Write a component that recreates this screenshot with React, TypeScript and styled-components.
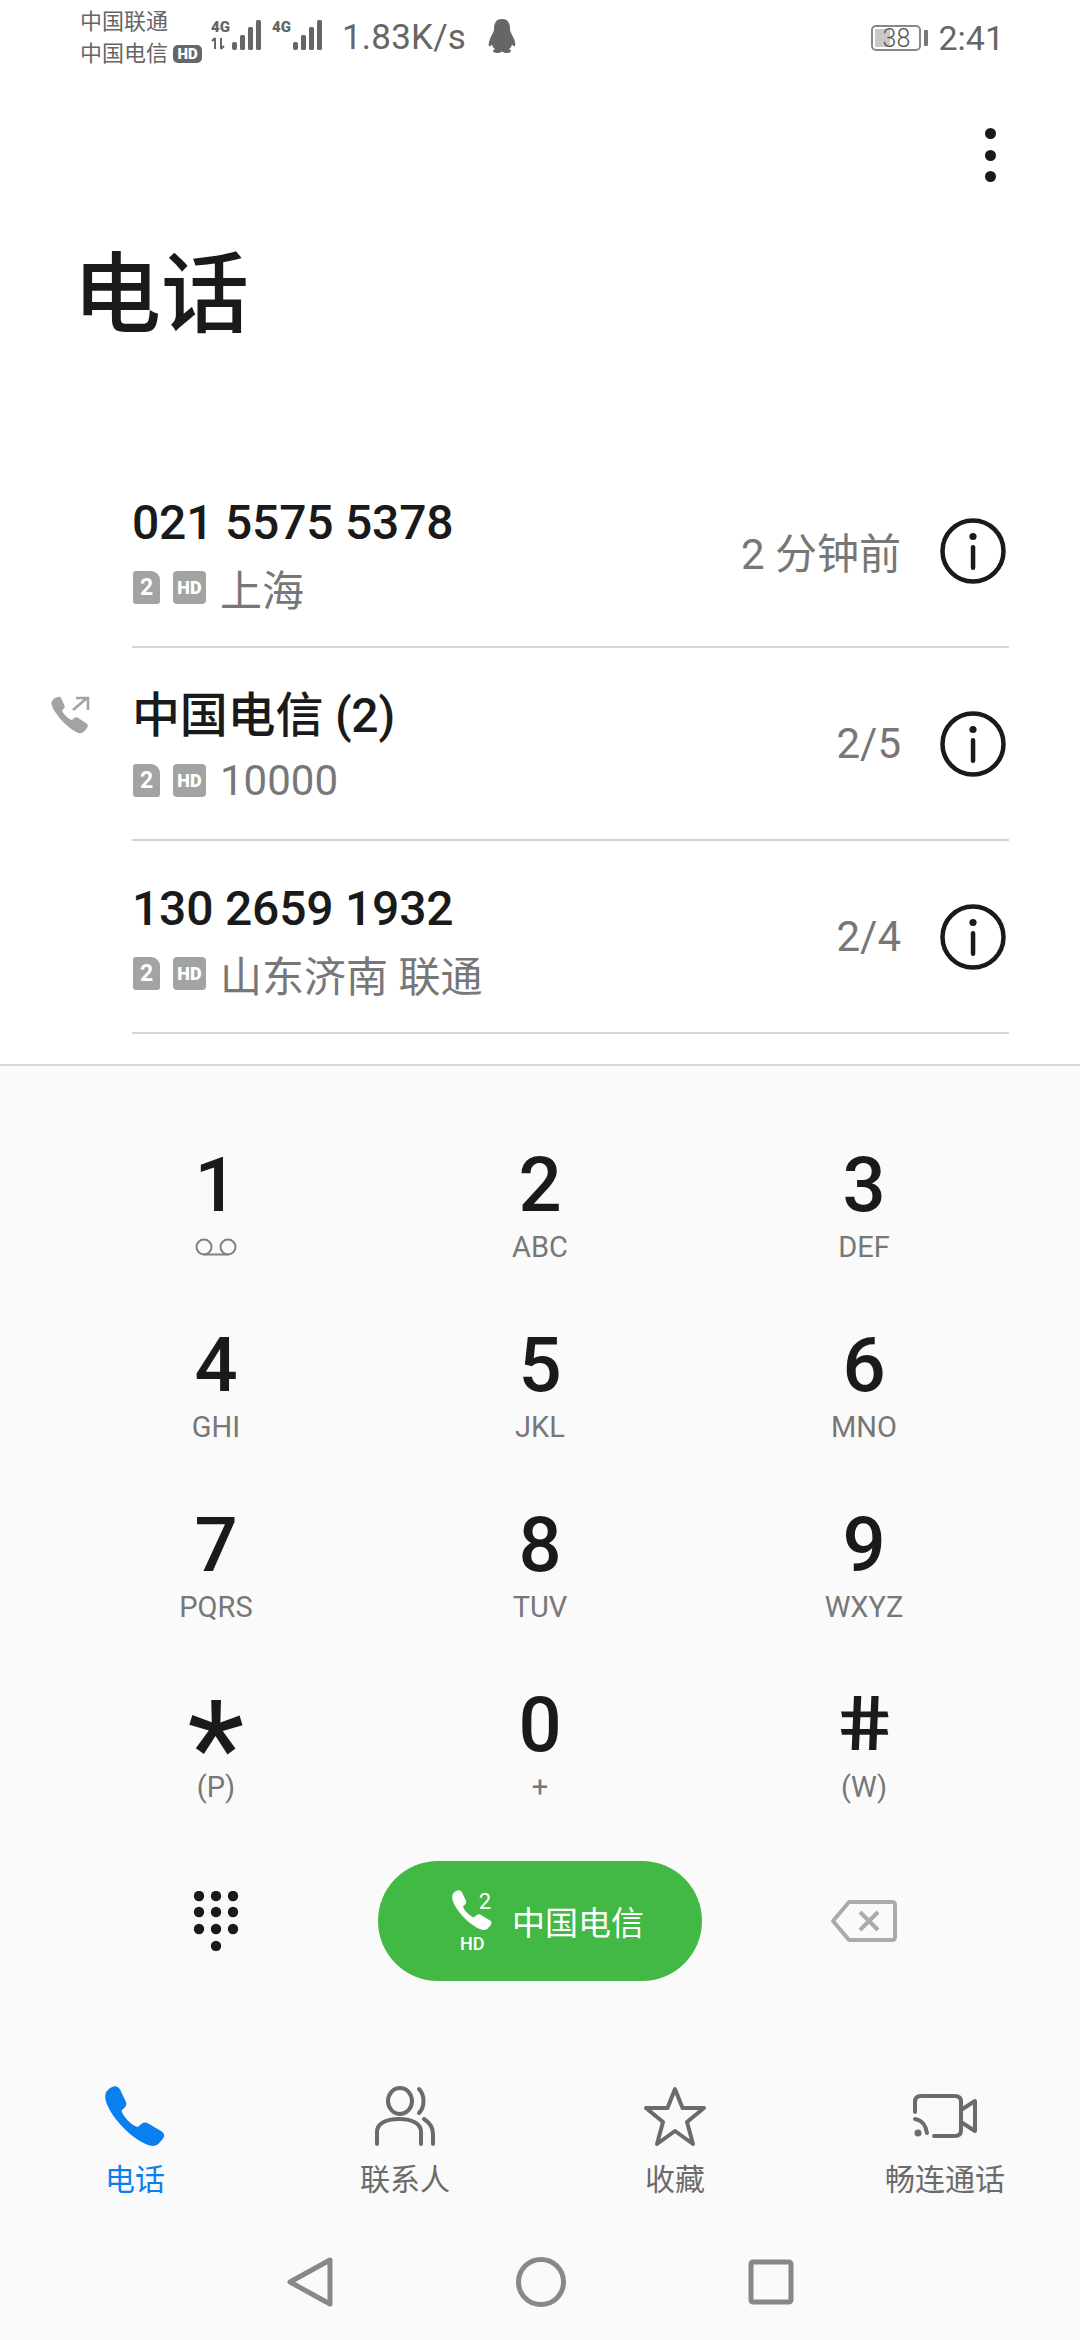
import React from "react";
import styled, { createGlobalStyle } from "styled-components";

const GlobalStyle = createGlobalStyle`
  html, body { margin: 0; padding: 0; background: #fff; }
  body { font-family: Roboto, "Noto Sans CJK SC", sans-serif; }
  * { box-sizing: border-box; }
`;

const Page = styled.div`
  width: 1080px;
  height: 2340px;
  overflow: hidden;
  display: flex;
  flex-direction: column;
  background: #fff;
  font-family: Roboto, "Noto Sans CJK SC", sans-serif;
`;

/* status bar */
const StatusBar = styled.div`
  height: 72px;
  padding: 4px 76px 0 80px;
  display: flex;
  align-items: center;
  color: #666;
`;
const Carriers = styled.div`
  width: 131px;
  flex: none;
  display: flex;
  flex-direction: column;
  font-size: 22px;
  line-height: 32px;
  white-space: nowrap;
`;
const CarrierLine = styled.div`
  display: flex;
  align-items: center;
  gap: 5px;
`;
const HdTiny = styled.span`
  flex: none;
  font-size: 15px;
  font-weight: 900;
  line-height: 18px;
  height: 18px;
  width: 29px;
  border-radius: 5px;
  background: #666;
  color: #fff;
  text-align: center;
`;
const Signals = styled.div`
  display: flex;
  gap: 11px;
  margin-top: -4px;
`;
const Signal = styled.svg`
  display: block;
  flex: none;
`;
const Speed = styled.span`
  font-size: 35px;
  line-height: 40px;
  margin-left: 20px;
  letter-spacing: 0.2px;
  white-space: nowrap;
`;
const Penguin = styled.svg`
  margin-left: 21px;
  margin-top: -4px;
  flex: none;
`;
const Spacer = styled.div`
  flex: 1;
`;
const Battery = styled.div`
  width: 50px;
  height: 26px;
  border: 2px solid #888;
  border-radius: 5px;
  display: flex;
  align-items: center;
  justify-content: center;
  font-size: 25px;
  font-weight: 300;
  color: #555;
  background: linear-gradient(90deg, #c8c8c8 0 38%, transparent 38%);
  background-clip: content-box;
  padding: 2px;
`;
const BatteryNub = styled.div`
  width: 4px;
  height: 16px;
  background: #777;
  border-radius: 1px;
  margin-left: 3px;
`;
const Time = styled.span`
  font-size: 34px;
  line-height: 40px;
  margin-left: 10px;
`;

/* header */
const MenuBar = styled.div`
  height: 171px;
  padding: 56px 84px 0 0;
  display: flex;
  flex-direction: column;
  align-items: flex-end;
  gap: 10.5px;
`;
const Dot = styled.span`
  width: 11px;
  height: 11px;
  border-radius: 50%;
  background: #1a1a1a;
`;
const Title = styled.h1`
  margin: 2px 0 110px 73px;
  font-size: 88px;
  line-height: 100px;
  height: 100px;
  font-weight: 500;
  color: #1a1a1a;
`;

/* call log */
const List = styled.div`
  display: flex;
  flex-direction: column;
`;
const Row = styled.div`
  height: 193px;
  margin: 0 71px 0 132px;
  border-bottom: 2px solid #d4d4d4;
  display: flex;
  align-items: center;
  position: relative;
`;
const RowMain = styled.div`
  flex: 1;
  display: flex;
  flex-direction: column;
  gap: 11px;
  padding-top: 5px;
`;
const RowTitle = styled.div`
  font-size: 48px;
  line-height: 58px;
  font-weight: 500;
  letter-spacing: -0.2px;
  color: #1a1a1a;
  white-space: nowrap;
`;
const RowSub = styled.div`
  display: flex;
  align-items: center;
  height: 50px;
  font-size: 42px;
  color: #777;
  white-space: nowrap;
`;
const SimBadge = styled.span`
  width: 27px;
  height: 33px;
  background: #a3a3a3;
  border-radius: 3px 9px 3px 3px;
  color: #fff;
  font-size: 23px;
  font-weight: 700;
  line-height: 33px;
  text-align: center;
  margin-left: 1px;
`;
const HdBadge = styled.span`
  width: 33px;
  height: 33px;
  background: #a3a3a3;
  border-radius: 4px;
  color: #fff;
  font-size: 18px;
  font-weight: 900;
  line-height: 33px;
  text-align: center;
  margin: 0 14px 0 13px;
`;
const RowTime = styled.span`
  font-size: 42px;
  color: #777;
  margin-right: 39px;
  white-space: nowrap;
`;
const InfoGlyph = styled.svg`
  display: block;
  flex: none;
  margin-right: 3px;
`;
const OutIcon = styled.svg`
  position: absolute;
  left: -83px;
  top: 47px;
`;

/* keypad */
const Dialer = styled.div`
  flex: 1;
  margin-top: 30px;
  border-top: 2px solid #d8d8d8;
  background: #fafafa;
  display: flex;
  flex-direction: column;
`;
const KeyGrid = styled.div`
  padding: 79px 54px 0;
  display: grid;
  grid-template-columns: repeat(3, 324px);
  grid-auto-rows: 180px;
`;
const Key = styled.div`
  display: flex;
  flex-direction: column;
  align-items: center;
`;
const Digit = styled.div`
  height: 80px;
  font-size: 76px;
  line-height: 80px;
  font-weight: 500;
  color: #1a1a1a;
`;
const BigStar = styled.div`
  height: 80px;
  font-size: 132px;
  line-height: 128px;
  font-weight: 400;
  color: #1a1a1a;
`;
const BigHash = styled.div`
  height: 80px;
  font-size: 76px;
  line-height: 78px;
  font-weight: 500;
  color: #1a1a1a;
  transform: skewX(10deg) scaleX(1.2);
`;
const SubLabel = styled.div`
  margin-top: 2px;
  height: 40px;
  font-size: 29px;
  line-height: 40px;
  color: #777;
  display: flex;
  align-items: center;
`;
const ActionRow = styled.div`
  margin-top: -4px;
  padding: 0 54px;
  display: grid;
  grid-template-columns: repeat(3, 324px);
  height: 120px;
  align-items: center;
  justify-items: center;
`;
const CallButton = styled.div`
  width: 324px;
  height: 120px;
  border-radius: 60px;
  background: #41b944;
  color: #fff;
  display: flex;
  align-items: center;
  justify-content: center;
  gap: 18px;
  padding-left: 16px;
  font-size: 33px;
`;
const CallMark = styled.div`
  width: 42px;
  height: 62px;
  position: relative;
`;
const CallPhone = styled.svg`
  display: block;
`;
const CallSim = styled.span`
  position: absolute;
  right: 3px;
  top: 0;
  font-size: 22px;
  line-height: 24px;
`;
const CallHd = styled.span`
  position: absolute;
  left: 8px;
  bottom: -2px;
  font-size: 18px;
  line-height: 20px;
  font-weight: 500;
`;

/* tabs */
const Tabs = styled.div`
  margin-top: 105px;
  display: grid;
  grid-template-columns: repeat(4, 270px);
`;
const Tab = styled.div<{ $active?: boolean }>`
  display: flex;
  flex-direction: column;
  align-items: center;
  gap: 14px;
  color: ${(p) => (p.$active ? "#0a7ff0" : "#6b6b6b")};
  font-size: 30px;
  line-height: 40px;
`;
const TabIcon = styled.svg`
  display: block;
`;
const NavBar = styled.div`
  padding-top: 57px;
  display: flex;
  justify-content: center;
  gap: 182px;
`;

const PHONE =
  "M5 1.5C6 1 7 1.5 7.5 2.5L9.5 7C9.8 7.8 9.5 8.5 9 9L8 10C8.3 12 11.5 15.5 13.5 16L14.8 14.8C15.4 14.3 16.2 14.2 16.9 14.6L21.5 17.5C22.5 18.2 22.7 19.2 22 20.2L20.5 22C19.5 23 18 23 16.5 22.3C9 18.5 3 10 2.5 5.5C2.3 3.5 3.5 2.2 5 1.5Z";

const InfoIcon = () => (
  <InfoGlyph width="66" height="66" viewBox="0 0 66 66">
    <circle cx="33" cy="33" r="30.500" fill="none" stroke="#1a1a1a" strokeWidth="4.500" />
    <circle cx="33" cy="18.500" r="3.600" fill="#1a1a1a" />
    <rect x="30.800" y="27" width="4.500" height="25" rx="2.200" fill="#1a1a1a" />
  </InfoGlyph>
);

const SignalIcon = ({ data }: { data?: boolean }) => (
  <Signal width="50" height="34" viewBox="0 0 50 34">
    <rect x="21" y="23" width="5" height="8" rx="2" fill="#666" />
    <rect x="29" y="16" width="5" height="15" rx="1.500" fill="#666" />
    <rect x="37" y="8" width="5" height="23" rx="1.500" fill="#666" />
    <rect x="45" y="1" width="5" height="30" rx="1.500" fill="#666" />
    <text x="0" y="13" fontFamily="Roboto" fontSize="15" fontWeight="900" fill="#666">
      4G
    </text>
    {data && <path d="M4 19v11M1 22l3-3M10 19v11M13 27l-3 3" stroke="#666" strokeWidth="2" fill="none" />}
  </Signal>
);

const keys: [string, string][] = [
  ["1", ""],
  ["2", "ABC"],
  ["3", "DEF"],
  ["4", "GHI"],
  ["5", "JKL"],
  ["6", "MNO"],
  ["7", "PQRS"],
  ["8", "TUV"],
  ["9", "WXYZ"],
  ["*", "(P)"],
  ["0", "+"],
  ["#", "(W)"],
];

const rows = [
  { title: "021 5575 5378", sub: "上海", time: "2 分钟前" },
  { title: "中国电信 (2)", sub: "10000", time: "2/5", out: true },
  { title: "130 2659 1932", sub: "山东济南 联通", time: "2/4" },
];

export default function App() {
  return (
    <Page>
      <GlobalStyle />
      <StatusBar>
        <Carriers>
          <CarrierLine>中国联通</CarrierLine>
          <CarrierLine>
            中国电信<HdTiny>HD</HdTiny>
          </CarrierLine>
        </Carriers>
        <Signals>
          <SignalIcon data />
          <SignalIcon />
        </Signals>
        <Speed>1.83K/s</Speed>
        <Penguin width="30" height="36" viewBox="0 0 30 36">
          <path
            d="M15 1C8.500 1 7 6 7 11C7 14 5 16 3 21C1.500 25 1 28 3 28.500L5 26.500C5.500 28.500 6.500 30 8 31C5.500 32 5 34.500 9 35C12 35.300 14 34.500 15 33.500C16 34.500 18 35.300 21 35C25 34.500 24.500 32 22 31C23.500 30 24.500 28.500 25 26.500L27 28.500C29 28 28.500 25 27 21C25 16 23 14 23 11C23 6 21.500 1 15 1Z"
            fill="#666"
          />
        </Penguin>
        <Spacer />
        <Battery>38</Battery>
        <BatteryNub />
        <Time>2:41</Time>
      </StatusBar>

      <MenuBar>
        <Dot />
        <Dot />
        <Dot />
      </MenuBar>
      <Title>电话</Title>

      <List>
        {rows.map((r) => (
          <Row key={r.title}>
            {r.out && (
              <OutIcon width="42" height="42" viewBox="0 0 42 42">
                <path
                  d="M9 2C10.500 1.500 12 2.500 12.500 4L15.500 10.500C16 12 15.500 13 14.500 14L13 15.500C14 18.500 19 24 23 25L25 23C26 22 27.500 22 28.500 22.500L37 28C39 29 39.500 31 38 33L36 35.500C34 38 31 39 28 37.500C17 32 4 17 2.500 9C2 6 4 3.500 9 2Z"
                  fill="#a3a3a3"
                />
                <path d="M24 15L38 3M27 3H39V15" fill="none" stroke="#a3a3a3" strokeWidth="2.600" />
              </OutIcon>
            )}
            <RowMain>
              <RowTitle>{r.title}</RowTitle>
              <RowSub>
                <SimBadge>2</SimBadge>
                <HdBadge>HD</HdBadge>
                {r.sub}
              </RowSub>
            </RowMain>
            <RowTime>{r.time}</RowTime>
            <InfoIcon />
          </Row>
        ))}
      </List>

      <Dialer>
        <KeyGrid>
          {keys.map(([d, s]) => (
            <Key key={d}>
              {d === "*" ? <BigStar>*</BigStar> : d === "#" ? <BigHash>#</BigHash> : <Digit>{d}</Digit>}
              <SubLabel>
                {s || (
                  <svg width="42" height="18" viewBox="0 0 42 18">
                    <circle cx="9" cy="9" r="7.500" fill="none" stroke="#808080" strokeWidth="2" />
                    <circle cx="33" cy="9" r="7.500" fill="none" stroke="#808080" strokeWidth="2" />
                    <path d="M9 16.500H33" stroke="#808080" strokeWidth="2" />
                  </svg>
                )}
              </SubLabel>
            </Key>
          ))}
        </KeyGrid>
        <ActionRow>
          <svg width="46" height="60" viewBox="0 0 46 60">
            {[5, 22, 39].flatMap((x) =>
              [5, 21, 38].map((y) => <circle key={`${x}-${y}`} cx={x + 1} cy={y} r="5.200" fill="#1a1a1a" />)
            )}
            <circle cx="23" cy="55" r="5.200" fill="#1a1a1a" />
          </svg>
          <CallButton>
            <CallMark>
              <CallPhone width="40" height="40" viewBox="2.400 1.200 20.300 21.600" preserveAspectRatio="none">
                <path d={PHONE} fill="#fff" />
              </CallPhone>
              <CallSim>2</CallSim>
              <CallHd>HD</CallHd>
            </CallMark>
            中国电信
          </CallButton>
          <svg width="68" height="44" viewBox="0 0 68 44">
            <path
              d="M19 3H62C64 3 65 4 65 6V38C65 40 64 41 62 41H19L3 22Z"
              fill="none"
              stroke="#aaa"
              strokeWidth="4"
              strokeLinejoin="round"
            />
            <path d="M30 13L48 31M48 13L30 31" stroke="#aaa" strokeWidth="4" />
          </svg>
        </ActionRow>

        <Tabs>
          <Tab $active>
            <TabIcon width="60" height="60" viewBox="2.400 1.200 20.300 21.600" preserveAspectRatio="none">
              <path d={PHONE} fill="#0a7ff0" />
            </TabIcon>
            电话
          </Tab>
          <Tab>
            <TabIcon width="60" height="60" viewBox="0 0 60 60">
              <g fill="none" stroke="#6b6b6b" strokeWidth="4" strokeLinecap="round">
                <ellipse cx="25" cy="15" rx="12" ry="13" />
                <path d="M44 3C50 9 50 21 44 27" />
                <path d="M2 58V46C2 38 10 33 24 33C38 33 46 38 46 46V58" />
                <path d="M49 33C55 37 58 42 58 48V58" />
              </g>
            </TabIcon>
            联系人
          </Tab>
          <Tab>
            <TabIcon width="64" height="60" viewBox="0 0 64 60">
              <path
                d="M32 3L39.500 22H61L44 36L50 58L32 45L14 58L20 36L3 22H24.500Z"
                fill="none"
                stroke="#6b6b6b"
                strokeWidth="4"
                strokeLinejoin="round"
              />
            </TabIcon>
            收藏
          </Tab>
          <Tab>
            <TabIcon width="66" height="60" viewBox="0 0 66 60">
              <g fill="none" stroke="#6b6b6b" strokeWidth="4" strokeLinecap="round" strokeLinejoin="round">
                <path d="M3 26V16C3 12 5 10 9 10H43C47 10 49 12 49 16V44C49 48 47 50 43 50H22" />
                <path d="M49 24L63 15V45L49 36" />
                <path d="M3 33C10 34 14 40 15 47" />
              </g>
              <circle cx="6" cy="47" r="3.500" fill="#6b6b6b" />
            </TabIcon>
            畅连通话
          </Tab>
        </Tabs>

        <NavBar>
          <svg width="48" height="50" viewBox="0 0 48 50">
            <path d="M44 3V47L4 25Z" fill="none" stroke="#888" strokeWidth="5" strokeLinejoin="round" />
          </svg>
          <svg width="50" height="50" viewBox="0 0 50 50">
            <circle cx="25" cy="25" r="22.500" fill="none" stroke="#888" strokeWidth="5" />
          </svg>
          <svg width="46" height="50" viewBox="0 0 46 50">
            <rect x="3" y="5" width="40" height="40" rx="2" fill="none" stroke="#888" strokeWidth="5" />
          </svg>
        </NavBar>
      </Dialer>
    </Page>
  );
}
